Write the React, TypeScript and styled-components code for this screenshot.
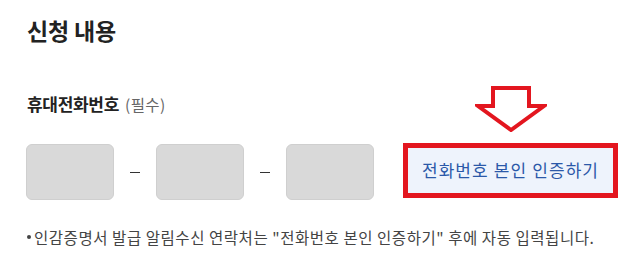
import React from 'react';
import styled, { createGlobalStyle } from 'styled-components';

const GlobalStyle = createGlobalStyle`
  html, body {
    margin: 0;
    padding: 0;
    background: #ffffff;
  }
  body {
    font-family: "Noto Sans CJK KR", "Noto Sans", sans-serif;
    color: #222222;
  }
`;

const Section = styled.section`
  width: 637px;
  height: 274px;
  box-sizing: border-box;
  padding: 13px 20px 0 27px;
`;

const Title = styled.h2`
  margin: 0;
  font-size: 23px;
  font-weight: 700;
  line-height: 34px;
  letter-spacing: -0.2px;
`;

const Label = styled.div`
  margin-top: 45px;
  font-size: 17px;
  font-weight: 700;
  line-height: 24px;
  letter-spacing: -0.3px;
`;

const Required = styled.span`
  margin-left: 6px;
  font-size: 15.5px;
  font-weight: 400;
  color: #666666;
  letter-spacing: 0.4px;
`;

const PhoneRow = styled.div`
  margin-top: 28px;
  display: flex;
  align-items: center;
  margin-left: -1px;
`;

const NumberBox = styled.input`
  flex: none;
  width: 88px;
  height: 56px;
  box-sizing: border-box;
  border: 1px solid #cfcfcf;
  border-radius: 6px;
  background: #d9d9d9;
  outline: none;
  padding: 0;
`;

const Dash = styled.span`
  flex: none;
  width: 10px;
  height: 1px;
  margin: 0 16px;
  background: #333333;
`;

const VerifyWrap = styled.div`
  position: relative;
  flex: none;
  margin-left: 29px;
  margin-top: -4px;
`;

const VerifyButton = styled.button`
  display: block;
  width: 215px;
  height: 55px;
  box-sizing: border-box;
  border: 5px solid #e3161f;
  background: #eef3fc;
  color: #2b58a8;
  font-family: "Noto Sans CJK KR", "Noto Sans", sans-serif;
  font-size: 17px;
  letter-spacing: 1.1px;
  padding: 0 0 2px;
  cursor: pointer;
`;

const ArrowMark = styled.svg`
  position: absolute;
  left: 72px;
  top: -57px;
`;

const Note = styled.p`
  margin: 26px 0 0;
  font-size: 15.5px;
  line-height: 22px;
  color: #444444;
  letter-spacing: 0.55px;
  display: flex;
  align-items: center;
  white-space: nowrap;
`;

const Bullet = styled.span`
  display: inline-block;
  flex: none;
  width: 4px;
  height: 4px;
  border-radius: 50%;
  background: #444444;
  margin-right: 3px;
`;

export default function App() {
  return (
    <>
      <GlobalStyle />
      <Section>
        <Title>신청 내용</Title>
        <Label>
          휴대전화번호<Required>(필수)</Required>
        </Label>
        <PhoneRow>
          <NumberBox aria-label="휴대전화 앞자리" />
          <Dash />
          <NumberBox aria-label="휴대전화 가운데자리" />
          <Dash />
          <NumberBox aria-label="휴대전화 뒷자리" />
          <VerifyWrap>
            <ArrowMark width="72" height="46" viewBox="0 0 72 46">
              <path
                d="M18 2 H54 V20 H69 L36 44 L3 20 H18 Z"
                fill="#ffffff"
                stroke="#e3161f"
                strokeWidth="4"
                strokeLinejoin="miter"
              />
            </ArrowMark>
            <VerifyButton type="button">전화번호 본인 인증하기</VerifyButton>
          </VerifyWrap>
        </PhoneRow>
        <Note>
          <Bullet />
          인감증명서 발급 알림수신 연락처는 "전화번호 본인 인증하기" 후에 자동 입력됩니다.
        </Note>
      </Section>
    </>
  );
}
